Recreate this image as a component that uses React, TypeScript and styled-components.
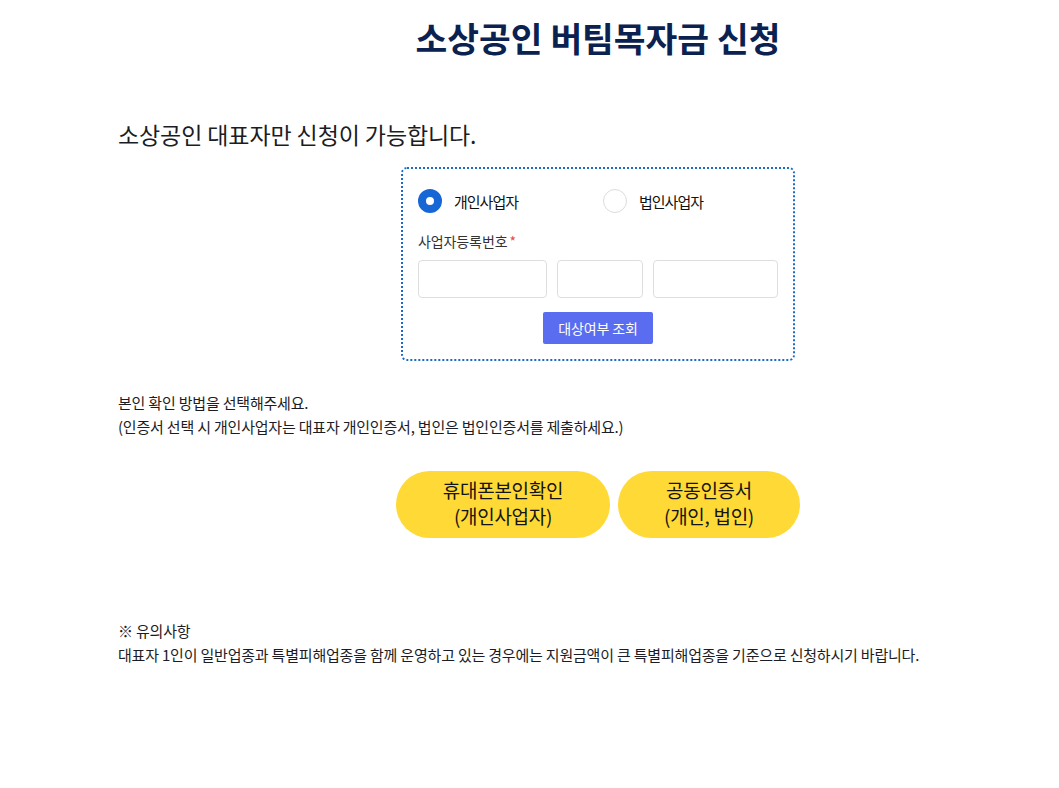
import React, { useState } from 'react'
import styled, { createGlobalStyle } from 'styled-components'

const GlobalStyle = createGlobalStyle`
  html, body {
    margin: 0;
    padding: 0;
    background: #fff;
  }

  body {
    font-family: "Noto Sans CJK KR", "Noto Sans", sans-serif;
    color: #1e1e1e;
  }
`

const Page = styled.div`
  width: 960px;
  padding: 14px 0 80px 118px;
`

const Title = styled.h1`
  margin: 0;
  text-align: center;
  font-size: 34.5px;
  line-height: 46px;
  font-weight: 700;
  color: #0b2250;
`

const Lead = styled.p`
  margin: 58px 0 0 0;
  font-size: 23px;
  line-height: 32px;
  letter-spacing: -0.1px;
  color: #1c1c24;
`

const CheckBox = styled.div`
  width: 394px;
  box-sizing: border-box;
  margin: 17px auto 0 auto;
  padding: 20px 15px 15px 15px;
  border: 2px dotted #1a6cc8;
  border-radius: 6px;
`

const RadioRow = styled.div`
  display: grid;
  grid-template-columns: 185px 1fr;
  height: 24px;
`

const RadioItem = styled.label`
  display: flex;
  align-items: center;
  gap: 12px;
  cursor: pointer;
  font-size: 15px;
  letter-spacing: -1px;
  color: #111;
`

const RadioDot = styled.span<{ $on: boolean }>`
  width: 24px;
  height: 24px;
  box-sizing: border-box;
  border-radius: 50%;
  background: #fff;
  border: ${p => (p.$on ? '8px solid #1766d6' : '1px solid #dcdcdc')};
`

const FieldLabel = styled.div`
  margin-top: 18px;
  font-size: 14px;
  line-height: 20px;
  letter-spacing: -0.1px;
  color: #333;

  & > em {
    font-style: normal;
    color: #e5484d;
    margin-left: 2px;
  }
`

const InputRow = styled.div`
  display: grid;
  grid-template-columns: 129px 86px 125px;
  gap: 10px;
  margin-top: 9px;
`

const NumInput = styled.input`
  height: 38px;
  box-sizing: border-box;
  border: 1px solid #dedede;
  border-radius: 4px;
  padding: 0 8px;
  font-family: inherit;
  font-size: 14px;
  outline: none;
`

const LookupButton = styled.button`
  display: block;
  margin: 14px auto 0 auto;
  width: 110px;
  height: 32px;
  border: none;
  border-radius: 2px;
  background: #5a6cef;
  color: #fff;
  font-family: inherit;
  font-size: 14px;
  letter-spacing: -0.1px;
  cursor: pointer;
`

const Guide = styled.p`
  margin: 30px 0 0 0;
  font-size: 15px;
  line-height: 24px;
  letter-spacing: -0.2px;
  color: #1c1c24;
`

const AuthRow = styled.div`
  display: flex;
  justify-content: center;
  gap: 8px;
  margin-top: 32px;
`

const AuthButton = styled.button<{ $w: number }>`
  width: ${p => p.$w}px;
  height: 67px;
  padding: 0 0 3px 0;
  border: none;
  border-radius: 34px;
  background: #ffd935;
  color: #141414;
  font-family: inherit;
  font-size: 19px;
  line-height: 26px;
  letter-spacing: -0.3px;
  cursor: pointer;
`

const Notice = styled.div`
  margin-top: 81px;
  font-size: 15px;
  line-height: 24px;
  letter-spacing: -0.2px;
  color: #1c1c24;
`

export default function App() {
  const [kind, setKind] = useState<'person' | 'corp'>('person')

  return (
    <Page>
      <GlobalStyle />
      <Title>소상공인 버팀목자금 신청</Title>
      <Lead>소상공인 대표자만 신청이 가능합니다.</Lead>

      <CheckBox>
        <RadioRow>
          <RadioItem onClick={() => setKind('person')}>
            <RadioDot $on={kind === 'person'} />
            개인사업자
          </RadioItem>
          <RadioItem onClick={() => setKind('corp')}>
            <RadioDot $on={kind === 'corp'} />
            법인사업자
          </RadioItem>
        </RadioRow>
        <FieldLabel>
          사업자등록번호<em>*</em>
        </FieldLabel>
        <InputRow>
          <NumInput maxLength={3} />
          <NumInput maxLength={2} />
          <NumInput maxLength={5} />
        </InputRow>
        <LookupButton>대상여부 조회</LookupButton>
      </CheckBox>

      <Guide>
        본인 확인 방법을 선택해주세요.
        <br />
        (인증서 선택 시 개인사업자는 대표자 개인인증서, 법인은 법인인증서를 제출하세요.)
      </Guide>

      <AuthRow>
        <AuthButton $w={214}>
          휴대폰본인확인
          <br />
          (개인사업자)
        </AuthButton>
        <AuthButton $w={182}>
          공동인증서
          <br />
          (개인, 법인)
        </AuthButton>
      </AuthRow>

      <Notice>
        ※ 유의사항
        <br />
        대표자 1인이 일반업종과 특별피해업종을 함께 운영하고 있는 경우에는 지원금액이 큰 특별피해업종을 기준으로 신청하시기 바랍니다.
      </Notice>
    </Page>
  )
}
